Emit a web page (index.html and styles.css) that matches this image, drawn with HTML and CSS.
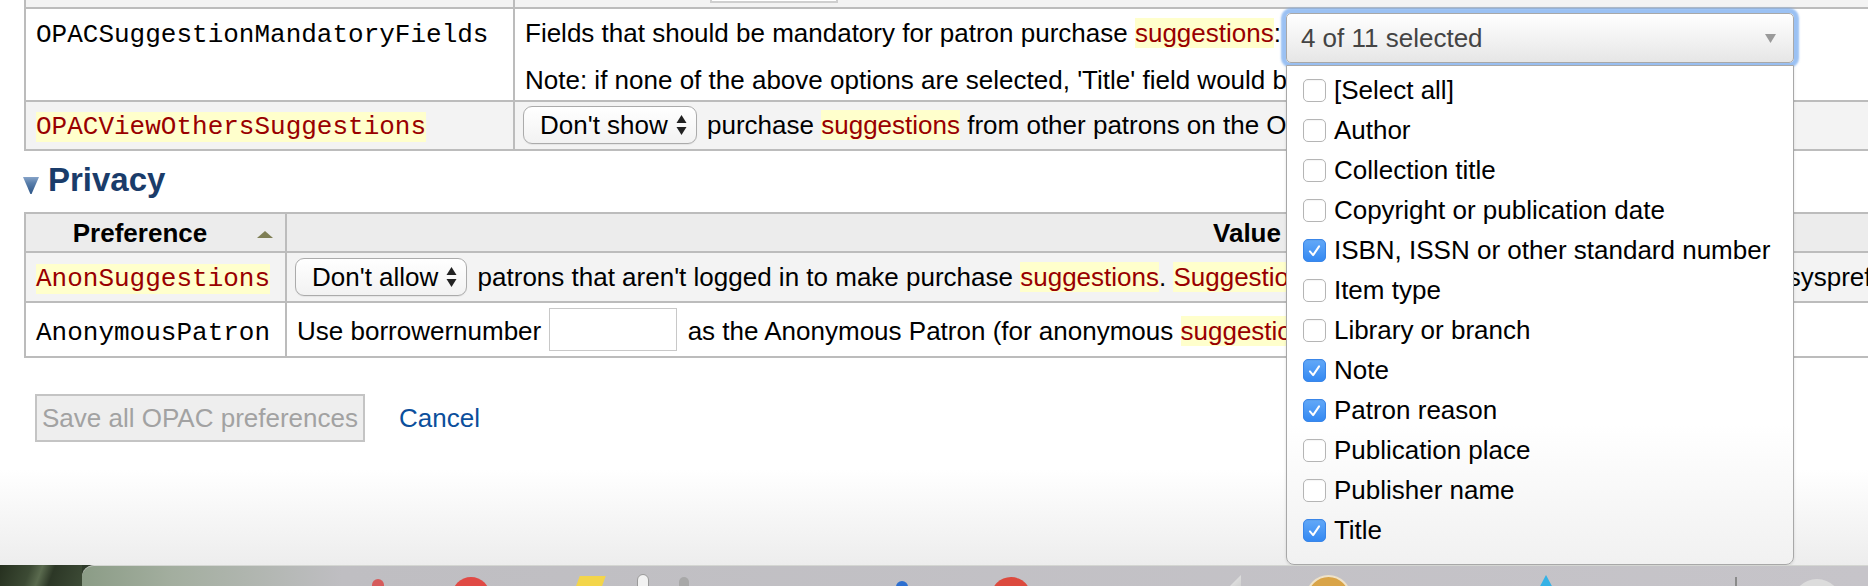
FILE: index.html
```html
<!DOCTYPE html>
<html lang="en">
<head>
<meta charset="utf-8">
<title>OPAC preferences</title>
<link rel="stylesheet" href="styles.css">
</head>
<body>
<div class="window">
  <div class="content">
    <table class="prefs prefs-top">
      <colgroup><col class="col-name-top"><col></colgroup>
      <tbody>
        <tr class="alt stub">
          <td></td>
          <td><div class="stub-input"></div></td>
        </tr>
        <tr>
          <td class="name"><code>OPACSuggestionMandatoryFields</code></td>
          <td class="value">
            <div class="line1">
              <span class="lead">Fields that should be mandatory for patron purchase <span class="hl">suggestions</span>:</span>
              <div class="ms">
                <div class="ms-button">
                  <span>4 of 11 selected</span>
                  <svg class="ms-caret" width="11" height="9" viewBox="0 0 11 9"><path d="M0 0 H11 L5.5 9 Z" fill="#9a9a9a"/></svg>
                </div>
                <ul class="ms-menu">
                  <li><span class="cb"></span>[Select all]</li>
                  <li><span class="cb"></span>Author</li>
                  <li><span class="cb"></span>Collection title</li>
                  <li><span class="cb"></span>Copyright or publication date</li>
                  <li><span class="cb on"><svg viewBox="0 0 23 23"><path d="M6.5 12.5 L10 16.5 L16.5 7" fill="none" stroke="#fff" stroke-width="2.2" stroke-linecap="round" stroke-linejoin="round"/></svg></span>ISBN, ISSN or other standard number</li>
                  <li><span class="cb"></span>Item type</li>
                  <li><span class="cb"></span>Library or branch</li>
                  <li><span class="cb on"><svg viewBox="0 0 23 23"><path d="M6.5 12.5 L10 16.5 L16.5 7" fill="none" stroke="#fff" stroke-width="2.2" stroke-linecap="round" stroke-linejoin="round"/></svg></span>Note</li>
                  <li><span class="cb on"><svg viewBox="0 0 23 23"><path d="M6.5 12.5 L10 16.5 L16.5 7" fill="none" stroke="#fff" stroke-width="2.2" stroke-linecap="round" stroke-linejoin="round"/></svg></span>Patron reason</li>
                  <li><span class="cb"></span>Publication place</li>
                  <li><span class="cb"></span>Publisher name</li>
                  <li><span class="cb on"><svg viewBox="0 0 23 23"><path d="M6.5 12.5 L10 16.5 L16.5 7" fill="none" stroke="#fff" stroke-width="2.2" stroke-linecap="round" stroke-linejoin="round"/></svg></span>Title</li>
                </ul>
              </div>
            </div>
            <div class="note">Note: if none of the above options are selected, 'Title' field would be mandatory by default</div>
          </td>
        </tr>
        <tr class="alt">
          <td class="name"><code class="hl">OPACViewOthersSuggestions</code></td>
          <td class="value"><span class="sel">Don't show<svg width="11" height="22" viewBox="0 0 11 22"><path d="M5.5 1 L10.5 9 H0.5 Z M5.5 21 L10.5 13 H0.5 Z" fill="#222"/></svg></span> purchase <span class="hl">suggestions</span> from other patrons on the OPAC.</td>
        </tr>
      </tbody>
    </table>

    <h3 class="section"><svg class="collapse-icon" width="16" height="17" viewBox="0 0 16 17"><defs><linearGradient id="tg" x1="0" y1="0" x2="0" y2="1"><stop offset="0" stop-color="#86a3c8"/><stop offset="0.35" stop-color="#5a7fab"/><stop offset="1" stop-color="#2d5688"/></linearGradient></defs><path d="M0 0 H16 L8.6 17 H7.4 Z" fill="url(#tg)"/></svg>Privacy</h3>

    <table class="prefs prefs-bottom">
      <colgroup><col class="col-name-bottom"><col></colgroup>
      <thead>
        <tr>
          <th class="sort-asc">Preference</th>
          <th>Value</th>
        </tr>
      </thead>
      <tbody>
        <tr class="alt">
          <td class="name"><code class="hl">AnonSuggestions</code></td>
          <td class="value"><span class="sel">Don't allow<svg width="11" height="22" viewBox="0 0 11 22"><path d="M5.5 1 L10.5 9 H0.5 Z M5.5 21 L10.5 13 H0.5 Z" fill="#222"/></svg></span> patrons that aren't logged in to make purchase <span class="hl">suggestions</span>. <span class="hl">Suggestions</span> are connected to the AnonymousPatron syspref</td>
        </tr>
        <tr>
          <td class="name"><code>AnonymousPatron</code></td>
          <td class="value">Use borrowernumber <span class="inp"></span> as the Anonymous Patron (for anonymous <span class="hl">suggestions</span>)</td>
        </tr>
      </tbody>
    </table>

    <div class="actions">
      <button class="save" type="button" disabled>Save all OPAC preferences</button>
      <a class="cancel" href="#">Cancel</a>
    </div>
  </div>
</div>
<div class="dock">
  <div class="wallpaper"></div>
  <div class="dock-bar">
    <span class="di di-1"></span>
    <span class="di di-2"></span>
    <span class="di di-3"></span>
    <span class="di di-4"></span>
    <span class="di di-5"></span>
    <span class="di di-6"></span>
    <span class="di di-7"></span>
    <span class="di di-8"></span>
    <span class="di di-9"></span>
    <span class="di di-10"></span>
    <span class="di di-11"></span>
    <span class="di di-12"></span>
  </div>
</div>
</body>
</html>
```

FILE: styles.css
```css
* { box-sizing: border-box; }

html, body {
  margin: 0;
  padding: 0;
}

body {
  width: 1868px;
  height: 586px;
  overflow: hidden;
  font-family: "Liberation Sans", Arial, Helvetica, sans-serif;
  font-size: 26px;
  color: #000;
  background: #fff;
}

.window {
  height: 565px;
  overflow: hidden;
  background: linear-gradient(to bottom, #fff 0, #fff 470px, #ededed 565px);
}

.content {
  padding-left: 24px;
}

/* ---------- preference tables ---------- */
.prefs {
  border-collapse: collapse;
  table-layout: fixed;
  width: 2216px;
  white-space: nowrap;
}

.col-name-top { width: 489px; }
.col-name-bottom { width: 261px; }

.prefs td,
.prefs th {
  border: 2px solid #bcbcbc;
  padding: 5px 10px;
  line-height: 30px;
  vertical-align: baseline;
  text-align: left;
}

.prefs-top { border-top: 0; }

.stub td {
  border-top: 0;
  height: 8px;
  padding: 0;
  vertical-align: top;
}

.stub-input {
  margin-left: 195px;
  width: 128px;
  height: 3px;
  border: 2px solid #cfcfcf;
  border-top: 0;
  background: #fff;
}

.alt td { background: #f3f3f3; }

code {
  font-family: "Liberation Mono", "Courier New", monospace;
  font-size: 26px;
}

.hl {
  background: #ffffcc;
  color: #990000;
}

.prefs-top .value { padding: 4px 10px 5px; }

.line1 {
  display: flex;
  align-items: flex-start;
}

.lead {
  margin-top: 5px;
}

.note {
  margin-top: 2px;
}

/* native mac style select */
.sel {
  display: inline-flex;
  align-items: center;
  gap: 8px;
  height: 38px;
  padding: 0 9px 0 16px;
  margin-left: -2px;
  margin-right: 3px;
  border: 1.5px solid #ababab;
  border-radius: 9px;
  background: linear-gradient(#ffffff, #f2f2f2);
  box-shadow: 0 1px 1px rgba(0, 0, 0, 0.06);
}

.inp {
  display: inline-block;
  width: 128px;
  height: 43px;
  margin: 0 3px 0 1px;
  vertical-align: -11px;
  border: 1px solid #c8c8c8;
  background: #fff;
}

/* ---------- multiselect widget ---------- */
.ms {
  position: relative;
  margin-left: 5px;
}

.ms-button {
  width: 508px;
  height: 50px;
  display: flex;
  align-items: center;
  justify-content: space-between;
  padding: 0 17px 0 14px;
  border: 1px solid #a8a8a8;
  border-radius: 5px;
  background: linear-gradient(#ffffff, #e6e6e6);
  color: #444;
  box-shadow: 0 0 2px 5px rgba(112, 166, 238, 0.7);
}

.ms-menu {
  position: absolute;
  left: 0;
  top: 52px;
  z-index: 10;
  width: 508px;
  height: 500px;
  margin: 0;
  padding: 4px 0 0;
  list-style: none;
  border: 1px solid #a8a8a8;
  border-radius: 0 0 8px 8px;
  background: linear-gradient(#ffffff 0, #ffffff 72%, #f1f1f1 100%);
  box-shadow: 0 1px 3px rgba(0, 0, 0, 0.12);
}

.ms-menu li {
  height: 40px;
  display: flex;
  align-items: center;
  gap: 8px;
  padding-left: 16px;
  color: #000;
}

.cb {
  flex: none;
  width: 23px;
  height: 23px;
  border: 1px solid #b5b5b5;
  border-radius: 5px;
  background: #fff;
  box-shadow: inset 0 1px 1px rgba(0, 0, 0, 0.04);
}

.cb svg {
  display: block;
  width: 21px;
  height: 21px;
}

.cb.on {
  border-color: #3a86e8;
  background: linear-gradient(#62a8f8, #3489f2);
}

/* ---------- section heading ---------- */
.section {
  margin: 10px 0 13px -1px;
  font-size: 33px;
  line-height: 38px;
  font-weight: bold;
  color: #1a3c6a;
}

.collapse-icon {
  margin-right: 9px;
  vertical-align: -3px;
}

.prefs th {
  background: #ececec;
  font-weight: bold;
  text-align: center;
  padding: 4px 41px 3px 10px;
  position: relative;
}

.sort-asc::after {
  content: "";
  position: absolute;
  right: 12px;
  top: 17px;
  border-left: 8px solid transparent;
  border-right: 8px solid transparent;
  border-bottom: 7px solid #7f7f55;
}

/* ---------- actions ---------- */
.actions {
  display: flex;
  align-items: center;
  margin-top: 36px;
  padding-left: 11px;
}

.save {
  height: 48px;
  padding: 0 5px;
  border: 2px solid #c4c4c4;
  background: #eeeeee;
  color: #a2a2a2;
  font-family: inherit;
  font-size: 26px;
  line-height: 44px;
}

.cancel {
  margin-left: 34px;
  color: #0b4f9c;
  text-decoration: none;
}

/* ---------- desktop dock ---------- */
.dock {
  height: 21px;
  display: flex;
  background: #2e3a2a;
}

.wallpaper {
  width: 82px;
  background: linear-gradient(110deg, #26301f 0, #3c4a34 35%, #5a6a4e 48%, #2c3726 62%, #3d4b36 100%);
}

.dock-bar {
  flex: 1;
  display: flex;
  align-items: flex-start;
  overflow: hidden;
  border-top-left-radius: 12px;
  border-top: 1px solid #d4d6d2;
  background: linear-gradient(to right, #8b9c86 0, #a3ae9f 90px, #bfbec2 260px, #c6c4c9 100%);
}

.di { flex: none; display: block; }
.di-1 { margin: 13px 0 0 290px; width: 12px; height: 20px; background: #d65b5b; border-radius: 6px 6px 0 0; }
.di-2 { margin: 11px 0 0 68px; width: 38px; height: 38px; background: #e04a45; border-radius: 50%; }
.di-3 { margin: 10px 0 0 85px; width: 26px; height: 26px; background: #f3d54a; transform: skewX(-20deg); }
.di-4 { margin: 8px 0 0 36px; width: 12px; height: 30px; background: #f2f2f2; border: 1px solid #9a9a9a; border-radius: 6px 6px 0 0; }
.di-5 { margin: 11px 0 0 30px; width: 10px; height: 30px; background: #a8a8a8; border-radius: 5px 5px 0 0; }
.di-6 { margin: 15px 0 0 207px; width: 12px; height: 20px; background: #2d6fd0; border-radius: 6px 6px 0 0; }
.di-7 { margin: 11px 0 0 83px; width: 40px; height: 40px; background: #dc4a3e; border-radius: 50%; }
.di-8 { margin: 9px 0 0 180px; width: 30px; height: 30px; background: linear-gradient(135deg, #ffffff, #bbbbbb); clip-path: polygon(100% 0, 100% 100%, 0 100%); }
.di-9 { margin: 9px 0 0 65px; width: 45px; height: 45px; background: #d9a448; border: 2px solid #efe2c8; border-radius: 50%; }
.di-10 { margin: 9px 0 0 187px; width: 16px; height: 30px; background: #35b2e6; clip-path: polygon(50% 0, 100% 50%, 50% 100%, 0 50%); }
.di-11 { margin: 11px 0 0 181px; width: 2px; height: 20px; background: #8a8a8a; }
.di-12 { margin: 13px 0 0 55px; width: 50px; height: 50px; background: #dcdcdc; border-radius: 50%; }
```
